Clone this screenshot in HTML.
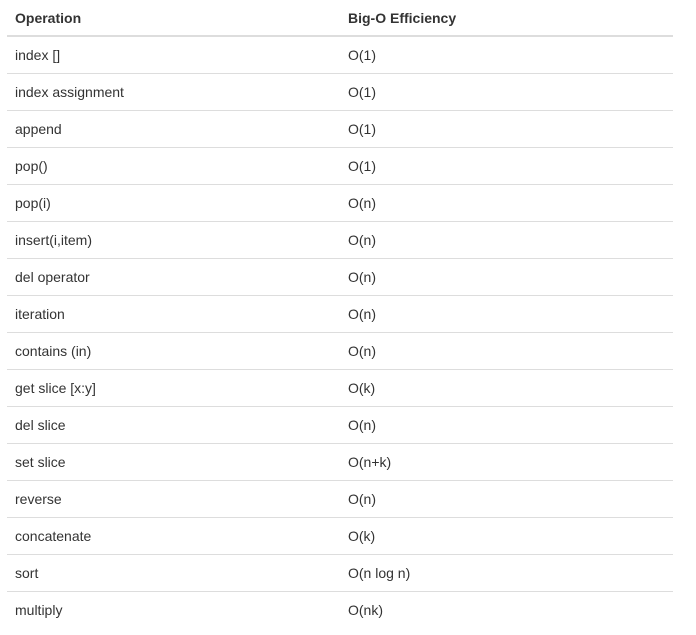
<!DOCTYPE html>
<html><head><style>
body{margin:0;background:#fff;font-family:"Liberation Sans",Arial,sans-serif;font-size:14px;color:#333}
table{position:absolute;left:7px;top:0;width:666px;border-collapse:collapse}
td,th{padding:0 8px;text-align:left;line-height:20px}
th{height:35px;font-weight:bold;border-bottom:2px solid #ddd;vertical-align:middle}
td{height:36px;border-top:1px solid #ddd;vertical-align:middle}
tr:nth-child(2) td{border-top:none}
.c2{width:317px}
</style></head><body>
<table>
<tr><th>Operation</th><th class="c2">Big-O Efficiency</th></tr>
<tr><td>index []</td><td>O(1)</td></tr>
<tr><td>index assignment</td><td>O(1)</td></tr>
<tr><td>append</td><td>O(1)</td></tr>
<tr><td>pop()</td><td>O(1)</td></tr>
<tr><td>pop(i)</td><td>O(n)</td></tr>
<tr><td>insert(i,item)</td><td>O(n)</td></tr>
<tr><td>del operator</td><td>O(n)</td></tr>
<tr><td>iteration</td><td>O(n)</td></tr>
<tr><td>contains (in)</td><td>O(n)</td></tr>
<tr><td>get slice [x:y]</td><td>O(k)</td></tr>
<tr><td>del slice</td><td>O(n)</td></tr>
<tr><td>set slice</td><td>O(n+k)</td></tr>
<tr><td>reverse</td><td>O(n)</td></tr>
<tr><td>concatenate</td><td>O(k)</td></tr>
<tr><td>sort</td><td>O(n log n)</td></tr>
<tr><td>multiply</td><td>O(nk)</td></tr>
</table>
</body></html>
